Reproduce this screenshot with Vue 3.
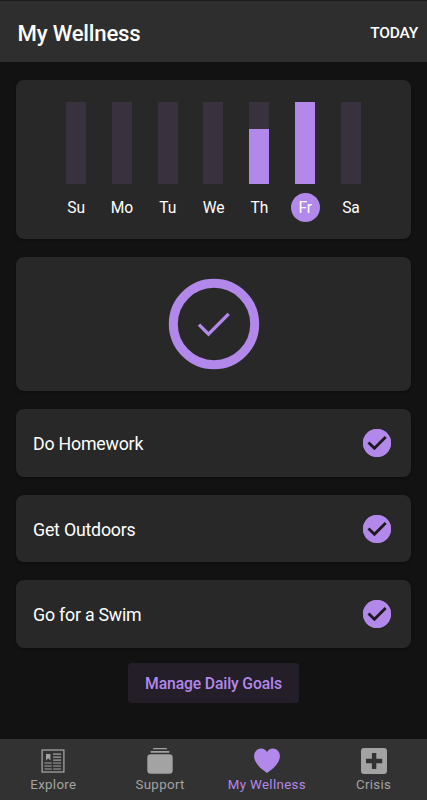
<script setup>
import { ref } from "vue";

const days = [
  { label: "Su", progress: 0 },
  { label: "Mo", progress: 0 },
  { label: "Tu", progress: 0 },
  { label: "We", progress: 0 },
  { label: "Th", progress: 67.5 },
  { label: "Fr", progress: 100 },
  { label: "Sa", progress: 0 },
];

const selectedDay = ref("Fr");

const goals = ref([
  { name: "Do Homework", done: true },
  { name: "Get Outdoors", done: true },
  { name: "Go for a Swim", done: true },
]);

const tabs = ["Explore", "Support", "My Wellness", "Crisis"];
const activeTab = ref("My Wellness");
</script>

<template>
  <div class="screen">
    <header class="header">
      <h1>My Wellness</h1>
      <button class="today" @click="selectedDay = 'Fr'">TODAY</button>
    </header>

    <main class="content">
      <section class="card week">
        <div v-for="day in days" :key="day.label" class="day" @click="selectedDay = day.label">
          <div class="bar">
            <div class="bar-fill" :style="{ height: `${day.progress}%` }"></div>
          </div>
          <span class="day-label" :class="{ selected: day.label === selectedDay }">{{ day.label }}</span>
        </div>
      </section>

      <section class="card summary">
        <svg width="92" height="92" viewBox="0 0 92 92">
          <circle cx="46" cy="46" r="40.7" fill="none" stroke="#b388eb" stroke-width="9" />
          <path d="M31 46.6L40.5 56.1L60.7 35.9" fill="none" stroke="#b388eb" stroke-width="3.4" />
        </svg>
      </section>

      <section v-for="goal in goals" :key="goal.name" class="card goal" @click="goal.done = !goal.done">
        <span>{{ goal.name }}</span>
        <svg width="28" height="28" viewBox="0 0 28 28">
          <circle cx="14" cy="14" r="13" fill="none" stroke="#b388eb" stroke-width="2" />
          <template v-if="goal.done">
            <circle cx="14" cy="14" r="14" fill="#b388eb" />
            <path d="M5.5 13.6L11.4 19.3L22.7 8" fill="none" stroke="#1c1a1e" stroke-width="2.8" />
          </template>
        </svg>
      </section>

      <button class="manage">Manage Daily Goals</button>
    </main>

    <nav class="tabs">
      <button
        v-for="tab in tabs"
        :key="tab"
        class="tab"
        :class="{ active: tab === activeTab }"
        @click="activeTab = tab"
      >
        <svg width="28" height="28" viewBox="0 0 28 28" fill="currentColor">
          <g v-if="tab === 'Explore'" fill="none" stroke="currentColor">
            <rect x="3.1" y="3" width="21.8" height="22" stroke-width="1.3" />
            <path d="M7 7h4.4v6.5l-2.2-2.2L7 13.5z" fill="currentColor" stroke="none" />
            <path
              d="M14.1 7.2h8M14.1 10.2h8M14.1 13.2h8M5.4 16h7.4M5.4 19h7.4M5.4 22h7.4M14.1 16h8M14.1 19h8M14.1 22h8"
              stroke-width="1.2"
            />
          </g>
          <g v-else-if="tab === 'Support'">
            <rect x="7" y="1" width="14" height="1.3" rx="0.6" />
            <rect x="4.5" y="4" width="19" height="1.7" rx="0.8" />
            <rect x="1.3" y="7.2" width="25.4" height="19.6" rx="3.3" />
          </g>
          <path
            v-else-if="tab === 'My Wellness'"
            d="M19.7 1.6c-2.4 0-4.5 1.3-5.7 3.4-1.2-2.1-3.3-3.4-5.7-3.4C4.3 1.6 1.1 4.9 1.1 9c0 6.2 5.1 11.8 12.9 17 7.8-5.2 12.9-10.8 12.9-17 0-4.1-3.2-7.4-7.2-7.4z"
          />
          <path
            v-else
            fill-rule="evenodd"
            d="M4 .9h20a3 3 0 0 1 3 3v20a3 3 0 0 1-3 3H4a3 3 0 0 1-3-3v-20a3 3 0 0 1 3-3zM11.9 5.9v5.9H6v4.4h5.9v5.9h4.4v-5.9h5.9v-4.4h-5.9V5.9z"
          />
        </svg>
        <span>{{ tab }}</span>
      </button>
    </nav>
  </div>
</template>

<style>
body {
  margin: 0;
  background: #121212;
}
</style>

<style scoped>
.screen {
  display: flex;
  flex-direction: column;
  box-sizing: border-box;
  height: 100vh;
  border-top: 1px solid #1c1c1c;
  background: #121212;
  color: #fff;
  font-family: Roboto, sans-serif;
}

button {
  padding: 0;
  border: none;
  background: none;
  color: inherit;
  font: inherit;
}

.header {
  display: flex;
  flex: none;
  align-items: center;
  justify-content: space-between;
  box-sizing: border-box;
  height: 61px;
  padding: 2px 9px 0 17.5px;
  background: #2e2e2e;
}

h1 {
  margin: 0;
  font-size: 22.2px;
  font-weight: 500;
  letter-spacing: -0.2px;
}

.today {
  font-size: 15.5px;
  font-weight: 500;
  letter-spacing: -0.2px;
}

.content {
  display: flex;
  flex: 1;
  flex-direction: column;
  gap: 18px;
  padding: 18px 16px 0;
}

.card {
  box-sizing: border-box;
  border-radius: 8px;
  background: #282828;
  box-shadow: 0 1px 3px rgba(0, 0, 0, 0.35);
}

.week {
  display: flex;
  justify-content: center;
  height: 159px;
  padding-top: 22px;
}

.day {
  display: flex;
  flex-direction: column;
  align-items: center;
  width: 45.8px;
}

.bar {
  display: flex;
  align-items: flex-end;
  width: 20px;
  height: 82px;
  background: #39313d;
}

.bar-fill {
  width: 100%;
  background: #b388eb;
}

.day-label {
  width: 29px;
  height: 29px;
  margin-top: 9px;
  border-radius: 50%;
  font-size: 15.6px;
  line-height: 30px;
  letter-spacing: -0.2px;
  text-align: center;
}

.day-label.selected {
  background: #b388eb;
}

.summary {
  display: flex;
  align-items: center;
  justify-content: center;
  height: 134px;
}

.goal {
  display: flex;
  align-items: center;
  justify-content: space-between;
  height: 67.7px;
  padding: 0 20px 0 17px;
  font-size: 17.8px;
  letter-spacing: -0.22px;
}

.goal span {
  padding-top: 1px;
}

.manage {
  align-self: center;
  width: 171px;
  height: 40px;
  margin-top: -3px;
  border-radius: 4px;
  background: #241e29;
  color: #b388eb;
  font-size: 15.7px;
  font-weight: 500;
  letter-spacing: -0.12px;
}

.tabs {
  display: flex;
  flex: none;
  height: 61px;
  background: #323232;
}

.tab {
  display: flex;
  flex: 1 1 0;
  flex-direction: column;
  align-items: center;
  padding-top: 8px;
  color: #a3a3a3;
  font-size: 13.3px;
  line-height: 19px;
  letter-spacing: 0.34px;
}

.tab.active {
  color: #b388eb;
}
</style>
